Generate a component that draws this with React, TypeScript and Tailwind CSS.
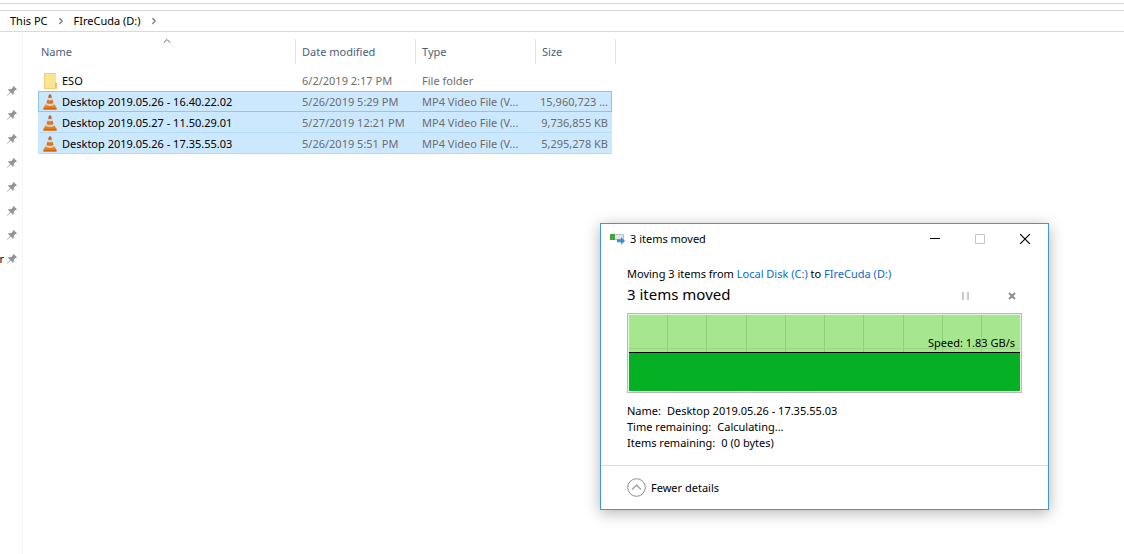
import { ChevronRight, ChevronUp } from 'lucide-react';

type FileRow = {
  name: string;
  date: string;
  type: string;
  size: string;
  kind: 'folder' | 'video';
  state: 'idle' | 'selected' | 'focused';
};

const files: FileRow[] = [
  {
    name: 'ESO',
    date: '6/2/2019 2:17 PM',
    type: 'File folder',
    size: '',
    kind: 'folder',
    state: 'idle',
  },
  {
    name: 'Desktop 2019.05.26 - 16.40.22.02',
    date: '5/26/2019 5:29 PM',
    type: 'MP4 Video File (V...',
    size: '15,960,723 ...',
    kind: 'video',
    state: 'focused',
  },
  {
    name: 'Desktop 2019.05.27 - 11.50.29.01',
    date: '5/27/2019 12:21 PM',
    type: 'MP4 Video File (V...',
    size: '9,736,855 KB',
    kind: 'video',
    state: 'selected',
  },
  {
    name: 'Desktop 2019.05.26 - 17.35.55.03',
    date: '5/26/2019 5:51 PM',
    type: 'MP4 Video File (V...',
    size: '5,295,278 KB',
    kind: 'video',
    state: 'selected',
  },
];

const cellStyles = {
  idle: 'border-y border-transparent',
  selected: 'border-y border-x-[#cce8ff] border-t-[#cce8ff] border-b-[#b5dcfb] bg-[#cce8ff]',
  focused: 'border-y border-[#8ac6f5] bg-[#cce8ff]',
};

const pins = ['', '', '', '', '', '', '', 'r'];

const gridLines = [38, 77, 117, 156, 195, 234, 274, 313, 352];

function PinIcon() {
  return (
    <svg width="12" height="12" viewBox="0 0 12 12" className="shrink-0" aria-hidden="true">
      <path
        d="M7.6 1 11 4.3 10.2 5.1 9.5 4.9 7.7 6.9 7.8 9 7 9.8 4.7 7.6 1.2 10.8.9 10.5 4.1 7 2 4.8 2.8 4 5 4.2 7 2.4 6.8 1.7Z"
        fill="#8f9499"
      />
    </svg>
  );
}

function FolderIcon() {
  return (
    <svg width="16" height="16" viewBox="0 0 16 16" className="shrink-0" aria-hidden="true">
      <path d="M2 0h12v9.500l1 .5v6H2Z" fill="#fbe394" />
      <path d="M2 0h1v16H2ZM2 0h12v1H2Z" fill="#efd078" />
      <path d="M13 9.500h1l1 .8V16h-2Z" fill="#ecc75e" />
      <path d="M2 15h13v1H2Z" fill="#efcf6e" />
    </svg>
  );
}

function ConeIcon() {
  return (
    <svg width="16" height="16" viewBox="0 0 16 16" className="shrink-0" aria-hidden="true">
      <path d="M3.300 10.500h9.400l1.800 3.300v1.700h-13v-1.700Z" fill="#ee8418" />
      <path d="M1.500 13.800h13v1.700h-13Z" fill="#d2640a" />
      <path d="M7 .5h2l3.300 11q-4.300 2.600-8.600 0Z" fill="#d9d4cd" />
      <path d="M7 .5h2l.9 3q-1.900.8-3.800 0Z" fill="#b3653a" />
      <path d="m5.400 5.800-.9 3.200q3.500 1.700 7 0l-.9-3.200q-2.600 1.200-5.200 0Z" fill="#dc7226" />
      <path d="m3.900 11-.3 1.200q4.400 2.200 8.800 0L12.100 11q-4.100 2.200-8.200 0Z" fill="#e77b17" />
    </svg>
  );
}

function MoveIcon() {
  return (
    <svg width="16" height="12" viewBox="0 0 16 12" className="shrink-0" aria-hidden="true">
      <path d="M.5 1.500h13v5H.5Z" fill="#e3e6e8" stroke="#bcc1c5" />
      <path d="M0 1h5v6H0Z" fill="#3da73a" />
      <path d="M7 6.300h4V4l4 4-4 3.800V9.300H7Z" fill="#3c8fd3" />
    </svg>
  );
}

function TransferChart() {
  return (
    <div className="relative mt-[9px] border border-[#b9b9b9] bg-[#e4f5df] p-px">
      <svg
        className="block h-[76px] w-full"
        viewBox="0 0 391 76"
        preserveAspectRatio="none"
        shapeRendering="crispEdges"
        aria-hidden="true"
      >
        <rect width="391" height="76" fill="#a6e68f" />
        {gridLines.map((x) => (
          <rect key={x} x={x} width="1" height="38" fill="#8fd07c" />
        ))}
        <rect y="33" width="391" height="1" fill="#94d880" />
        <rect y="37" width="391" height="1" fill="#000000" />
        <rect y="38" width="391" height="38" fill="#06b025" />
      </svg>
      <span className="absolute right-[6px] top-[21px] leading-4">Speed: 1.83 GB/s</span>
    </div>
  );
}

function MoveDialog() {
  return (
    <section
      role="dialog"
      aria-label="3 items moved"
      className="absolute left-[600px] top-[223px] w-[449px] border border-[#3d9bd0] bg-white text-black shadow-[0_3px_14px_rgba(0,0,0,0.3)]"
    >
      <header className="flex h-[30px] items-center pl-[9px]">
        <MoveIcon />
        <h2 className="ml-1 flex-1">3 items moved</h2>
        <button type="button" aria-label="Minimize" className="flex h-7 w-[45px] items-center justify-center">
          <svg width="10" height="10" viewBox="0 0 10 10">
            <path d="M0 4.500h10" stroke="#000" />
          </svg>
        </button>
        <button type="button" aria-label="Maximize" disabled className="flex h-7 w-[45px] items-center justify-center">
          <svg width="10" height="10" viewBox="0 0 10 10">
            <path d="M.5.5h9v9h-9Z" fill="none" stroke="#c4c4c4" />
          </svg>
        </button>
        <button type="button" aria-label="Close" className="flex h-7 w-[46px] items-center justify-center">
          <svg width="10" height="10" viewBox="0 0 10 10">
            <path d="m0 0 10 10m0-10L0 10" stroke="#000" strokeWidth="1.200" />
          </svg>
        </button>
      </header>

      <div className="px-[26px] pb-[14px] pt-3">
        <p className="leading-4">
          Moving 3 items from{' '}
          <a href="#local-disk" className="text-[#0a6ccf]">
            Local Disk (C:)
          </a>{' '}
          to{' '}
          <a href="#firecuda" className="text-[#0a6ccf]">
            FIreCuda (D:)
          </a>
        </p>

        <div className="mt-[2px] flex h-5 items-center">
          <p className="flex-1 text-[15px] leading-5">3 items moved</p>
          <button type="button" aria-label="Pause" disabled className="flex h-5 w-5 items-end justify-center pb-[4px]">
            <svg width="8" height="8" viewBox="0 0 8 8">
              <path d="M1 0h2v8H1ZM6 0h2v8H6Z" fill="#c9c9c9" />
            </svg>
          </button>
          <button type="button" aria-label="Cancel" className="ml-[27px] flex h-5 w-5 items-end justify-center pb-[4px]">
            <svg width="8" height="8" viewBox="0 0 8 8">
              <path d="m1 1 6 6m0-6L1 7" stroke="#8e8e8e" strokeWidth="2" />
            </svg>
          </button>
        </div>

        <TransferChart />

        <dl className="mt-[10px] leading-4">
          <div className="flex gap-[6px]">
            <dt>Name:</dt>
            <dd>Desktop 2019.05.26 - 17.35.55.03</dd>
          </div>
          <div className="flex gap-[6px]">
            <dt>Time remaining:</dt>
            <dd>Calculating...</dd>
          </div>
          <div className="flex gap-[6px]">
            <dt>Items remaining:</dt>
            <dd>0 (0 bytes)</dd>
          </div>
        </dl>
      </div>

      <footer className="flex h-11 items-center border-t border-[#dfdfdf] px-[26px]">
        <button type="button" className="flex items-center gap-[5px]">
          <svg width="19" height="19" viewBox="0 0 19 19" fill="none" aria-hidden="true">
            <circle cx="9.500" cy="9.500" r="8.800" stroke="#8c8c8c" />
            <path d="m5 11.500 4.500-4.500 4.500 4.500" stroke="#a4a4a4" strokeWidth="1.500" />
          </svg>
          Fewer details
        </button>
      </footer>
    </section>
  );
}

function FileTable() {
  return (
    <table className="w-[578px] table-fixed border-separate border-spacing-0 text-left">
      <thead>
        <tr className="h-[25px] text-[#4c607a]">
          <th className="relative w-[258px] border-r border-[#e2e2e2] p-0 pl-[3px] font-normal">
            Name
            <ChevronUp
              size={12}
              strokeWidth={2}
              className="absolute left-1/2 top-[-4px] -translate-x-1/2 text-[#5f5f5f]"
            />
          </th>
          <th className="w-[120px] border-r border-[#e2e2e2] p-0 pl-[6px] font-normal">Date modified</th>
          <th className="w-[120px] border-r border-[#e2e2e2] p-0 pl-[6px] font-normal">Type</th>
          <th className="w-[76px] p-0 pl-[6px] font-normal">Size</th>
          <td className="w-1 border-r border-[#e2e2e2] p-0" />
        </tr>
        <tr className="h-[6px]" />
      </thead>
      <tbody>
        {files.map((file) => {
          const cell = cellStyles[file.state];

          return (
            <tr key={file.name} className="h-[21px] whitespace-nowrap text-[#6d6d6d]">
              <td className={`${cell} border-l p-0 pl-[3px]`}>
                <div className="flex items-center gap-1 text-black">
                  {file.kind === 'folder' ? <FolderIcon /> : <ConeIcon />}
                  {file.name}
                </div>
              </td>
              <td className={`${cell} p-0 pl-[6px]`}>{file.date}</td>
              <td className={`${cell} p-0 pl-[6px]`}>{file.type}</td>
              <td className={`${cell} border-r p-0 pr-[3px] text-right`}>{file.size}</td>
            </tr>
          );
        })}
      </tbody>
    </table>
  );
}

export default function App() {
  return (
    <div className="relative flex min-h-screen flex-col overflow-hidden bg-white font-['Noto_Sans','Open_Sans',sans-serif] text-[11px] leading-4 text-black">
      <div className="h-1 border-b border-[#d9d9d9]" />

      <nav
        aria-label="Address"
        className="mt-[6px] flex h-[22px] items-center border-y border-[#d9d9d9] pl-[10px]"
      >
        <a href="#this-pc">This PC</a>
        <ChevronRight size={10} strokeWidth={3} className="mx-2 text-[#777777]" />
        <a href="#firecuda">FIreCuda (D:)</a>
        <ChevronRight size={10} strokeWidth={3} className="mx-2 text-[#777777]" />
      </nav>

      <div className="flex flex-1">
        <aside className="w-[23px] border-r border-[#f3f3f3] pt-[47px]">
          <ul>
            {pins.map((label, index) => (
              <li key={index} className="flex h-6 items-center justify-end pr-1">
                {label && <span className="mr-[2px]">{label}</span>}
                <PinIcon />
              </li>
            ))}
          </ul>
        </aside>

        <main className="pl-[15px] pt-[7px]">
          <FileTable />
        </main>
      </div>

      <MoveDialog />
    </div>
  );
}
